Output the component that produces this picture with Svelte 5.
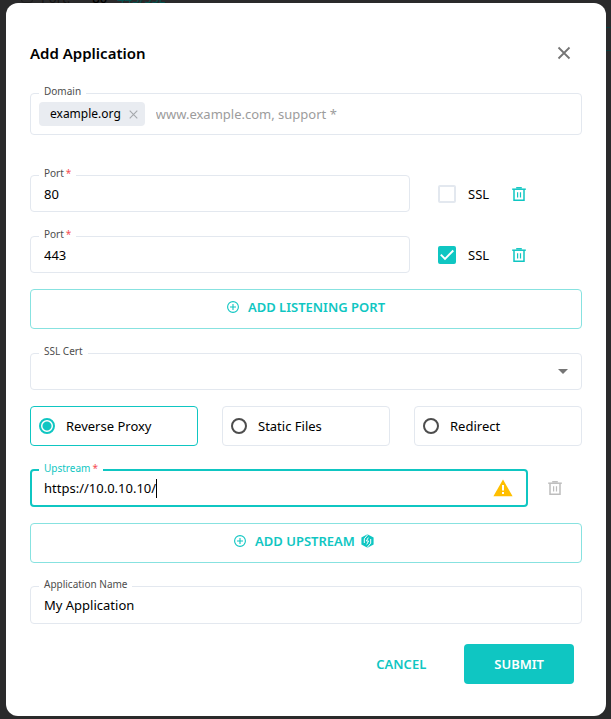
<script>
  let tags = $state(['example.org']);
  let domain = $state('');
  let ports = $state([
    { id: 1, port: '80', ssl: false },
    { id: 2, port: '443', ssl: true }
  ]);
  let cert = $state('');
  const modes = ['Reverse Proxy', 'Static Files', 'Redirect'];
  let mode = $state('Reverse Proxy');
  let upstream = $state('https://10.0.10.10/');
  let name = $state('My Application');

  function addPort() {
    ports.push({ id: ports.length + 10, port: '', ssl: false });
  }
  function removePort(id) {
    ports = ports.filter((p) => p.id !== id);
  }
</script>

{#snippet trash()}
  <svg width="14" height="16" viewBox="0 0 14 16" fill="none" stroke="currentColor" aria-hidden="true">
    <path d="M0.2 3.2H13.8" stroke-width="1.5" />
    <path d="M4.2 1.8H9.8" stroke-width="1.5" />
    <path d="M2 3.2V14.3H12V3.2" stroke-width="1.5" />
    <path d="M5.6 6.2V11.6M8.5 6.2V11.6" stroke-width="1.2" />
  </svg>
{/snippet}

{#snippet plus()}
  <svg width="12" height="12" viewBox="0 0 12 12" fill="none" stroke="currentColor" aria-hidden="true">
    <circle cx="6" cy="6" r="5.4" stroke-width="1.1" />
    <path d="M3 6H9M6 3V9" stroke-width="1.1" />
  </svg>
{/snippet}

<div class="page">
  <div class="behind" aria-hidden="true">
    <span class="b-box"></span><span>Port:</span><b>80</b><em>443/SSL</em>
  </div>
  <div class="behind-button" aria-hidden="true"></div>

  <form class="dialog" role="dialog" aria-labelledby="title" onsubmit={(e) => e.preventDefault()}>
    <header>
      <h1 id="title">Add Application</h1>
      <button type="button" class="icon close" aria-label="Close">
        <svg width="14" height="14" viewBox="0 0 14 14" stroke="currentColor" stroke-width="1.8" aria-hidden="true">
          <path d="M1.5 1.5L12.5 12.5M12.5 1.5L1.5 12.5" />
        </svg>
      </button>
    </header>

    <div class="field domain">
      <label for="domain">Domain</label>
      {#each tags as tag}
        <span class="tag">
          {tag}
          <button type="button" class="icon" aria-label="Remove {tag}" onclick={() => (tags = tags.filter((t) => t !== tag))}>
            <svg width="9" height="9" viewBox="0 0 9 9" stroke="currentColor" stroke-width="1.1" aria-hidden="true">
              <path d="M0.7 0.7L8.3 8.3M8.3 0.7L0.7 8.3" />
            </svg>
          </button>
        </span>
      {/each}
      <input id="domain" bind:value={domain} placeholder="www.example.com, support *" />
    </div>

    <div class="ports">
      {#each ports as p (p.id)}
        <div class="row">
          <div class="field">
            <label for="port-{p.id}">Port<i>*</i></label>
            <input id="port-{p.id}" bind:value={p.port} />
          </div>
          <div class="options">
            <label class="check">
              <span class="box">
                <input type="checkbox" bind:checked={p.ssl} />
                {#if p.ssl}
                  <svg width="18" height="18" viewBox="0 0 18 18" fill="none" stroke="#fff" stroke-width="1.9" aria-hidden="true">
                    <path d="M2.8 8.6L7 12.8L15.3 4.5" />
                  </svg>
                {/if}
              </span>
              SSL
            </label>
            <button type="button" class="icon" aria-label="Delete port" onclick={() => removePort(p.id)}>
              {@render trash()}
            </button>
          </div>
        </div>
      {/each}
    </div>

    <button type="button" class="outlined" onclick={addPort}>{@render plus()}<span>ADD LISTENING PORT</span></button>

    <div class="field cert">
      <label for="cert">SSL Cert</label>
      <select id="cert" bind:value={cert}>
        <option value=""></option>
      </select>
      <svg width="10" height="5" viewBox="0 0 10 5" fill="#757575" aria-hidden="true"><path d="M0 0H10L5 5Z" /></svg>
    </div>

    <div class="modes" role="radiogroup" aria-label="Type">
      {#each modes as m}
        <label class="mode" class:active={mode === m}>
          <input type="radio" name="mode" value={m} bind:group={mode} />
          {m}
        </label>
      {/each}
    </div>

    <div class="row upstream">
      <div class="field focused">
        <label for="upstream">Upstream<i>*</i></label>
        <input id="upstream" bind:value={upstream} />
        <span class="caret"></span>
        <svg class="warning" width="20" height="18" viewBox="0 0 20 18" aria-hidden="true">
          <path d="M10 0.5L19.6 17.3H0.4Z" fill="#ffbf00" />
          <path d="M9 6H11V11.5H9ZM9 13H11V15H9Z" fill="#fff" />
        </svg>
      </div>
      <button type="button" class="icon" disabled aria-label="Delete upstream">{@render trash()}</button>
    </div>

    <button type="button" class="outlined">
      {@render plus()}<span>ADD UPSTREAM</span>
      <svg class="pro" width="13" height="14" viewBox="0 0 13 14" aria-hidden="true">
        <path d="M6.5 0.2L12.6 3.6V10.4L6.5 13.8L0.4 10.4V3.6Z" fill="currentColor" />
        <path d="M7 0.4L3.3 4.8V9M6 13.6L9.7 9.2V5M7.3 3.6L5.4 7H7.6L5.7 10.4" fill="none" stroke="#fff" stroke-width="1" />
      </svg>
    </button>

    <div class="field name">
      <label for="name">Application Name</label>
      <input id="name" bind:value={name} />
    </div>

    <footer>
      <button type="button" class="cancel">CANCEL</button>
      <button type="submit" class="submit">SUBMIT</button>
    </footer>
  </form>
</div>

<style>
  :global(body) {
    background: #2a2a2b;
  }
  .page,
  .page * {
    box-sizing: border-box;
  }
  .page {
    --teal: #0fc6c2;
    --line: #e3e8ef;
    position: relative;
    min-height: 100vh;
    padding: 3px 5px 3px 6px;
    overflow: hidden;
    font-family: 'Segoe UI', 'Noto Sans', 'Open Sans', sans-serif;
    font-size: 13px;
    line-height: 20px;
    color: #000;
  }
  .behind {
    position: absolute;
    top: -12px;
    left: 21px;
    display: flex;
    align-items: center;
    color: #151515;
  }
  .behind b {
    margin-left: 22px;
    font-weight: 500;
    color: #000;
  }
  .behind em {
    margin-left: 10px;
    font-style: normal;
    color: #06504e;
  }
  .b-box {
    width: 12px;
    height: 10px;
    margin-right: 8px;
    border: 1px solid #1c1c1c;
    border-radius: 3px;
  }
  .behind-button {
    position: absolute;
    top: 27px;
    right: 0;
    width: 40px;
    height: 24px;
    border: solid #0b3b3b;
    border-width: 1px 0;
  }
  .dialog {
    position: relative;
    max-width: 600px;
    margin: 0 auto;
    padding: 38px 24px 32px;
    display: flex;
    flex-direction: column;
    background: #fff;
    border-radius: 12px;
  }
  button,
  input,
  select {
    margin: 0;
    padding: 0;
    border: 0;
    background: none;
    font: inherit;
    color: inherit;
    outline: none;
  }
  button {
    cursor: pointer;
  }
  svg {
    display: block;
    flex: none;
  }
  header {
    display: flex;
    align-items: center;
    justify-content: space-between;
    height: 24px;
    margin-bottom: 28px;
  }
  h1 {
    margin: 0;
    font-size: 15px;
    font-weight: 600;
  }
  .icon {
    display: flex;
    color: var(--teal);
  }
  .icon:disabled {
    color: #bdbdbd;
    cursor: default;
  }
  .close {
    margin-right: 11px;
    color: #757575;
  }
  .field {
    position: relative;
    flex: 1;
    display: flex;
    align-items: center;
    min-width: 0;
    min-height: 37px;
    padding: 0 13px;
    border: 1px solid var(--line);
    border-radius: 4px;
  }
  .dialog > .field {
    flex: none;
  }
  .field > label {
    position: absolute;
    top: -11px;
    left: 8px;
    padding: 0 5px;
    background: #fff;
    font-size: 10px;
    line-height: 16px;
    color: #4d4d4d;
  }
  .field i {
    margin-left: 2px;
    font-style: normal;
    color: #f64e54;
  }
  .field input,
  .field select {
    flex: 1;
    min-width: 0;
    height: 24px;
  }
  .field select {
    appearance: none;
  }
  .domain {
    min-height: 42px;
    padding: 0 8px;
    gap: 11px;
    margin-bottom: 40px;
  }
  .tag {
    display: flex;
    align-items: center;
    gap: 8px;
    height: 24px;
    padding: 0 7px 0 11px;
    border-radius: 4px;
    background: #e9ecf1;
    font-size: 12px;
  }
  .tag .icon {
    color: #a5a8ac;
  }
  input::placeholder {
    color: #9c9c9c;
    opacity: 1;
  }
  .ports {
    display: flex;
    flex-direction: column;
    gap: 24px;
    margin-bottom: 16px;
  }
  .row {
    display: flex;
    align-items: center;
    gap: 28px;
  }
  .options {
    display: flex;
    align-items: center;
    gap: 23px;
    width: 144px;
  }
  .check {
    display: flex;
    align-items: center;
    gap: 12px;
  }
  .box {
    position: relative;
    width: 18px;
    height: 18px;
  }
  .box input {
    display: block;
    appearance: none;
    width: 18px;
    height: 18px;
    border: 2px solid var(--line);
    border-radius: 2px;
  }
  .box input:checked {
    border-color: var(--teal);
    background: var(--teal);
  }
  .box svg {
    position: absolute;
    inset: 0;
    pointer-events: none;
  }
  .outlined {
    display: flex;
    align-items: center;
    justify-content: center;
    gap: 9px;
    height: 40px;
    padding-bottom: 4px;
    border: 1px solid #87e2e0;
    border-radius: 4px;
    font-weight: 600;
    color: var(--teal);
  }
  .pro {
    margin: 0 4px 0 -3px;
  }
  .cert {
    margin: 24px 0 16px;
  }
  .modes {
    display: grid;
    grid-template-columns: repeat(3, 1fr);
    gap: 24px;
  }
  .mode {
    display: flex;
    align-items: center;
    gap: 11px;
    height: 40px;
    padding: 0 8px;
    border: 1px solid var(--line);
    border-radius: 4px;
    white-space: nowrap;
  }
  .mode.active {
    border-color: var(--teal);
  }
  .mode input {
    flex: none;
    appearance: none;
    width: 16px;
    height: 16px;
    border: 2px solid #4d4d4d;
    border-radius: 50%;
  }
  .mode input:checked {
    border-color: var(--teal);
    background: radial-gradient(circle, var(--teal) 4px, transparent 5px);
  }
  .upstream {
    gap: 20px;
    margin: 23px 0 16px;
    padding-right: 20px;
  }
  .focused {
    min-height: 38px;
    padding: 0 13px 0 12px;
    border: 2px solid var(--teal);
  }
  .focused > label {
    left: 7px;
    color: var(--teal);
  }
  .focused input {
    flex: none;
    field-sizing: content;
    max-width: 80%;
  }
  .caret {
    width: 1px;
    height: 19px;
    background: #000;
  }
  .warning {
    margin-left: auto;
  }
  .name {
    min-height: 38px;
    margin: 23px 0 20px;
  }
  footer {
    display: flex;
    justify-content: flex-end;
    gap: 8px;
    padding-right: 8px;
    font-weight: 600;
  }
  footer button {
    height: 40px;
    padding: 0 30px;
    border-radius: 4px;
  }
  .cancel {
    color: var(--teal);
  }
  .submit {
    background: var(--teal);
    color: #fff;
  }
</style>
